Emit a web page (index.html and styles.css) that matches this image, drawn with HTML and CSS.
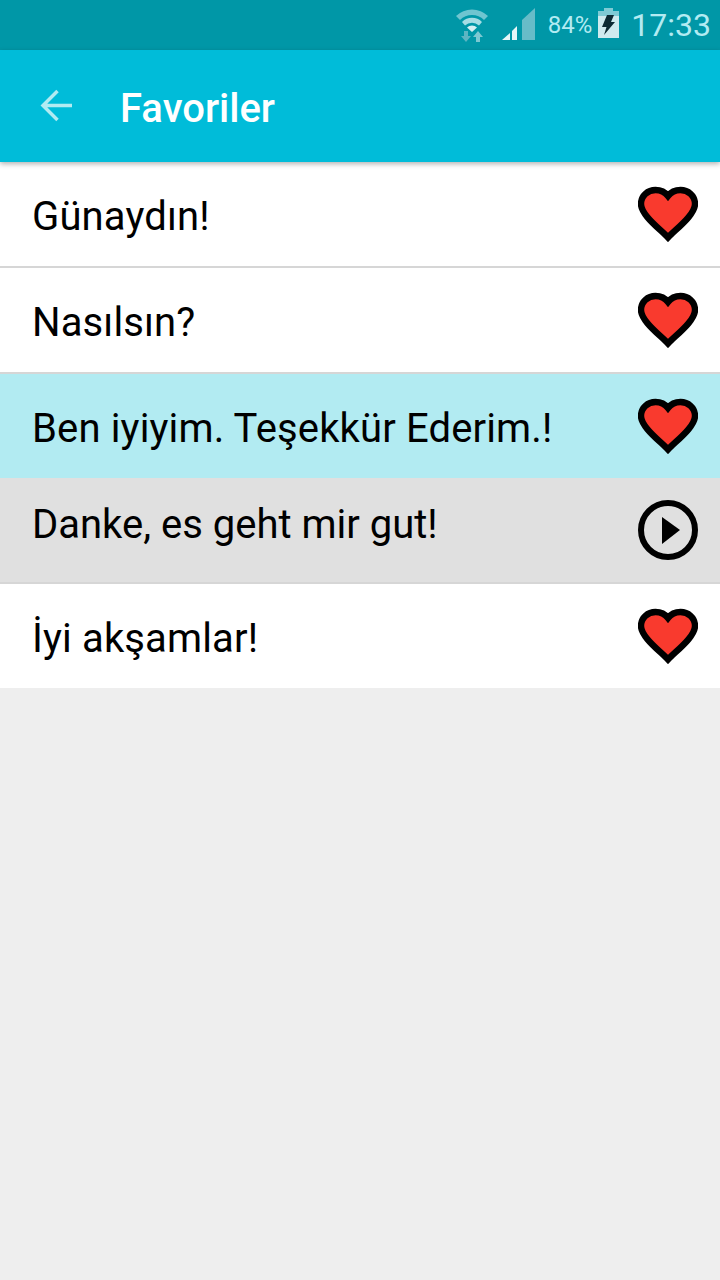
FILE: index.html
```html
<!DOCTYPE html>
<html lang="tr">
<head>
    <meta charset="UTF-8">
    <meta name="viewport" content="width=device-width, initial-scale=1.0">
    <title>Favoriler</title>
    <link rel="stylesheet" href="styles.css">
</head>
<body>
    <svg class="sprite" width="0" height="0">
        <symbol id="heart" viewBox="0 0 60 56">
            <path d="M30 51.500 C22 43 3 29 3 18 C3 9.500 10 4 17.500 4 C22.500 4 27 6 30 10 C33 6 37.500 4 42.500 4 C50 4 57 9.500 57 18 C57 29 38 43 30 51.500 Z" fill="#f93a2e" stroke="#000" stroke-width="6.400" stroke-linejoin="miter"/>
        </symbol>
    </svg>

    <!-- Status bar -->
    <div class="status-bar">
        <svg class="wifi" width="36" height="36" viewBox="0 0 36 36">
            <path d="M2 9 A23 23 0 0 1 34 9 L30 13 A17 17 0 0 0 6 13 Z" fill="#6fc5d0"/>
            <path d="M8 15 A14 14 0 0 1 28 15 L25 18.500 A10 10 0 0 0 11 18.500 Z" fill="#a5dde4"/>
            <path d="M13 20.500 A7 7 0 0 1 23 20.500 L18 25 Z" fill="#d5f0f3"/>
            <path d="M12 24 L17 30 H14 V35 H10 V30 H7 Z" transform="rotate(180 12 29.500)" fill="#5db5c2"/>
            <path d="M24 24 L29 30 H26 V35 H22 V30 H19 Z" fill="#7cc8d2"/>
        </svg>
        <svg class="signal" width="33" height="32" viewBox="0 0 33 32">
            <path d="M0 32 L8 25 V32 Z" fill="#e6f6f8"/>
            <path d="M10 23 L15 18 V32 H10 Z" fill="#e6f6f8"/>
            <path d="M20 12 L33 0 V32 H20 Z" fill="#67bcc8"/>
        </svg>
        <span class="battery-pct">84%</span>
        <svg class="battery" width="21" height="30" viewBox="0 0 21 30">
            <path d="M6 0 H15 V3 H21 V8 H0 V3 H6 Z" fill="#7fcbd5"/>
            <path d="M0 8 H21 V30 H0 Z" fill="#cfeaee"/>
            <path d="M9 7 H16 L13 14 H17 L6 27 L8.500 19 H4 Z" fill="#0c2a33"/>
        </svg>
        <span class="clock">17:33</span>
    </div>

    <!-- Toolbar -->
    <header class="toolbar">
        <svg class="back" width="34" height="34" viewBox="0 0 34 34">
            <path d="M32 16.500 H3 M17.500 2 L3 16.500 L17.500 31" fill="none" stroke="#b2ebf2" stroke-width="3.500"/>
        </svg>
        <h1 class="title">Favoriler</h1>
    </header>

    <!-- List -->
    <ul class="phrase-list">
        <li class="phrase">
            <span class="phrase-text">Günaydın!</span>
            <svg class="phrase-icon" width="60" height="56"><use href="#heart"/></svg>
        </li>
        <li class="phrase">
            <span class="phrase-text">Nasılsın?</span>
            <svg class="phrase-icon" width="60" height="56"><use href="#heart"/></svg>
        </li>
        <li class="phrase phrase-selected">
            <span class="phrase-text">Ben iyiyim. Teşekkür Ederim.!</span>
            <svg class="phrase-icon" width="60" height="56"><use href="#heart"/></svg>
        </li>
        <li class="phrase phrase-open">
            <span class="phrase-text">Danke, es geht mir gut!</span>
            <svg class="phrase-icon" width="60" height="60" viewBox="0 0 60 60">
                <circle cx="30" cy="30" r="27" fill="none" stroke="#000" stroke-width="6"/>
                <path d="M24 17 L42 30 L24 44 Z" fill="#000"/>
            </svg>
        </li>
        <li class="phrase phrase-last">
            <span class="phrase-text">İyi akşamlar!</span>
            <svg class="phrase-icon" width="60" height="56"><use href="#heart"/></svg>
        </li>
    </ul>
</body>
</html>
```

FILE: styles.css
```css
* {
    margin: 0;
    padding: 0;
    box-sizing: border-box;
    font-family: 'Roboto', sans-serif;
}

body {
    background: #eeeeee;
    color: #000;
    min-height: 100vh;
}

.sprite {
    position: absolute;
}

/* Status bar */
.status-bar {
    height: 50px;
    background: #0097a7;
    display: flex;
    align-items: center;
    justify-content: flex-end;
    padding-right: 9px;
}

.wifi {
    margin-right: 12px;
}

.signal {
    margin-right: 13px;
    margin-top: -2px;
}

.battery-pct {
    font-size: 24px;
    color: #b2ebf2;
    margin-right: 6px;
}

.battery {
    margin-right: 12px;
    margin-top: -4px;
}

.clock {
    font-size: 32px;
    color: #b2ebf2;
}

/* Toolbar */
.toolbar {
    position: relative;
    height: 112px;
    background: #00bcd9;
    display: flex;
    align-items: center;
    padding-left: 40px;
    box-shadow: 0 2px 5px rgba(0, 0, 0, 0.3);
}

.back {
    margin-right: 46px;
}

.title {
    font-size: 40px;
    font-weight: 500;
    color: #fff;
    margin-top: 5px;
}

/* List */
.phrase-list {
    list-style: none;
}

.phrase {
    height: 106px;
    background: #fff;
    border-bottom: 2px solid #d6d6d6;
    display: flex;
    align-items: center;
    justify-content: space-between;
    padding: 0 22px 0 32px;
}

.phrase-text {
    font-size: 40px;
    letter-spacing: 0.14px;
    margin-top: 4px;
}

.phrase-icon {
    flex-shrink: 0;
}

.phrase-selected {
    height: 104px;
    background: #b2ebf2;
    border-bottom: 0;
}

.phrase-open {
    background: #e0e0e0;
}

.phrase-open .phrase-text {
    letter-spacing: 0;
    margin-top: 0;
    margin-bottom: 12px;
}

.phrase-last {
    height: 104px;
    border-bottom: 0;
}
```
